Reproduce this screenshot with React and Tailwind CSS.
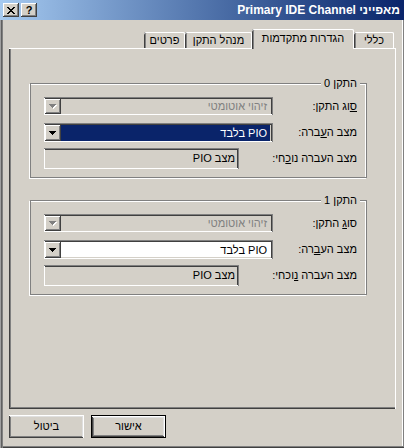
const raised = 'shadow-[inset_-1px_-1px_#404040,inset_1px_1px_#fff,inset_-2px_-2px_#808080,inset_2px_2px_#d4d0c8]'
const raisedRtl = 'shadow-[inset_-1px_1px_#fff,inset_1px_-1px_#404040,inset_-2px_2px_#dfdfdf,inset_2px_-2px_#808080]'
const sunkenRtl = 'shadow-[inset_-1px_1px_#808080,inset_1px_-1px_#fff,inset_-2px_2px_#404040,inset_2px_-2px_#d4d0c8]'

function Arrow({ disabled }) {
  return (
    <svg width="8" height="5" viewBox="0 0 8 5" shapeRendering="crispEdges">
      {disabled && (
        <g fill="#fff">
          <rect x="1" y="1" width="7" height="1" />
          <rect x="2" y="2" width="5" height="1" />
          <rect x="3" y="3" width="3" height="1" />
          <rect x="4" y="4" width="1" height="1" />
        </g>
      )}
      <g fill={disabled ? '#808080' : '#000'}>
        <rect x="0" y="0" width="7" height="1" />
        <rect x="1" y="1" width="5" height="1" />
        <rect x="2" y="2" width="3" height="1" />
        <rect x="3" y="3" width="1" height="1" />
      </g>
    </svg>
  )
}

function Combo({ text, disabled, selected, h }) {
  return (
    <div className={`flex w-[229px] ${h} pt-[2px] pr-[2px] pb-px pl-px ${sunkenRtl} ${disabled || selected ? 'bg-[#d4d0c8]' : 'bg-white'}`}>
      <div className="flex-1 flex items-center pr-px">
        <div
          className={`flex-1 h-full flex items-center pr-[3px] ${
            selected ? 'bg-[#0a246a] text-white' : disabled ? 'text-[#808080]' : 'text-black'
          }`}
        >
          {text}
        </div>
      </div>
      <div className={`w-[16px] flex items-center justify-center bg-[#d4d0c8] ${raised}`}>
        <Arrow disabled={disabled} />
      </div>
    </div>
  )
}

function Field({ text }) {
  return (
    <div className={`w-[195px] h-[21px] flex items-center pr-[4px] bg-[#d4d0c8] ${sunkenRtl}`}>
      {text}
    </div>
  )
}

function Group({ title, labels, selected, mt }) {
  return (
    <div className={`relative h-[95px] border border-[#808080] shadow-[inset_-1px_1px_#fff,-1px_1px_#fff] pt-[13px] pr-[9px] pl-[13px] ${mt}`}>
      <span className="absolute -top-[7px] right-[6px] bg-[#d4d0c8] px-[3px] leading-[13px]">{title}</span>
      <div className="flex flex-col">
        <div className="flex items-center justify-between h-[18px]">
          <span>{labels[0]}</span>
          <Combo text="זיהוי אוטומטי" disabled h="h-[18px]" />
        </div>
        <div className="flex items-center justify-between h-[19px] mt-[8px]">
          <span>{labels[1]}</span>
          <Combo text="PIO בלבד" selected={selected} h="h-[19px]" />
        </div>
        <div className="flex items-center justify-between h-[21px] mt-[6px]">
          <span>{labels[2]}</span>
          <Field text="מצב PIO" />
        </div>
      </div>
    </div>
  )
}

const tabs = [
  { label: 'כללי', w: 'w-[40px]' },
  { label: 'הגדרות מתקדמות', w: 'w-[102px]', active: true },
  { label: 'מנהל התקן', w: 'w-[67px]' },
  { label: 'פרטים', w: 'w-[41px]' },
]

export default function App() {
  return (
    <div
      dir="rtl"
      className="relative w-[404px] h-[448px] overflow-hidden bg-[#d4d0c8] flex flex-col font-['Liberation_Sans',sans-serif] text-[11px] leading-none text-black shadow-[inset_1px_0_#a0a0a0,inset_2px_0_#606060,inset_3px_0_#808080,inset_0_-1px_#404040,inset_0_-2px_#808080,inset_-1px_0_#808080,inset_-2px_0_#fff]"
    >
      {/* Title bar */}
      <div className="h-[20px] flex items-center justify-between bg-gradient-to-r from-[#a6caf0] to-[#0a246a] pr-[4px] pl-[3px]">
        <span className="text-white font-bold text-[12px] whitespace-nowrap">מאפייני Primary IDE Channel</span>
        <div className="flex gap-[2px]">
          <div className={`w-[16px] h-[14px] bg-[#d4d0c8] flex items-center justify-center font-bold text-[11px] ${raised}`}>?</div>
          <div className={`w-[16px] h-[14px] bg-[#d4d0c8] flex items-center justify-center ${raised}`}>
            <svg width="8" height="7" viewBox="0 0 8 7" shapeRendering="crispEdges">
              <path d="M0 0h2l2 2.5L6 0h2L5 3.5 8 7H6L4 4.5 2 7H0l3-3.5z" fill="#000" />
            </svg>
          </div>
        </div>
      </div>

      {/* Tabs */}
      <div className="mt-[9px] ml-[9px] mr-[8px] h-[19px] flex items-end pr-[2px]">
        {tabs.map((t, i) => (
          <div
            key={i}
            className={`${t.w} flex items-center justify-center bg-[#d4d0c8] rounded-tl-[2px] rounded-tr-[2px] shadow-[inset_0_1px_#fff,inset_-1px_0_#fff,inset_1px_0_#404040,inset_2px_0_#808080] ${
              t.active ? 'h-[20px] -mb-px relative z-10 pb-[2px]' : 'h-[16px]'
            }`}
          >
            {t.label}
          </div>
        ))}
      </div>

      {/* Panel */}
      <div className="ml-[9px] mr-[8px] h-[361px] pt-[35px] pl-[21px] pr-[29px] shadow-[inset_0_1px_#fff,inset_-1px_0_#fff,inset_1px_0_#404040,inset_0_-1px_#404040,inset_2px_0_#808080,inset_0_-2px_#808080]">
        <Group
          title="התקן 0"
          selected
          labels={[
            <><span className="underline">ס</span>וג התקן:</>,
            <>מצב ה<span className="underline">ע</span>ברה:</>,
            <>מצב העברה נו<span className="underline">כ</span>חי:</>,
          ]}
        />
        <Group
          title="התקן 1"
          mt="mt-[22px]"
          labels={[
            <>סו<span className="underline">ג</span> התקן:</>,
            <>מצב הע<span className="underline">ב</span>רה:</>,
            <>מצב העברה <span className="underline">נ</span>וכחי:</>,
          ]}
        />
      </div>

      {/* Buttons */}
      <div className="mt-[6px] ml-[9px] flex justify-end gap-[7px]">
        <div className="w-[75px] h-[23px] border border-black">
          <div className={`w-full h-full flex items-center justify-center bg-[#d4d0c8] ${raisedRtl}`}>אישור</div>
        </div>
        <div className={`w-[75px] h-[23px] flex items-center justify-center bg-[#d4d0c8] ${raisedRtl}`}>ביטול</div>
      </div>
    </div>
  )
}
